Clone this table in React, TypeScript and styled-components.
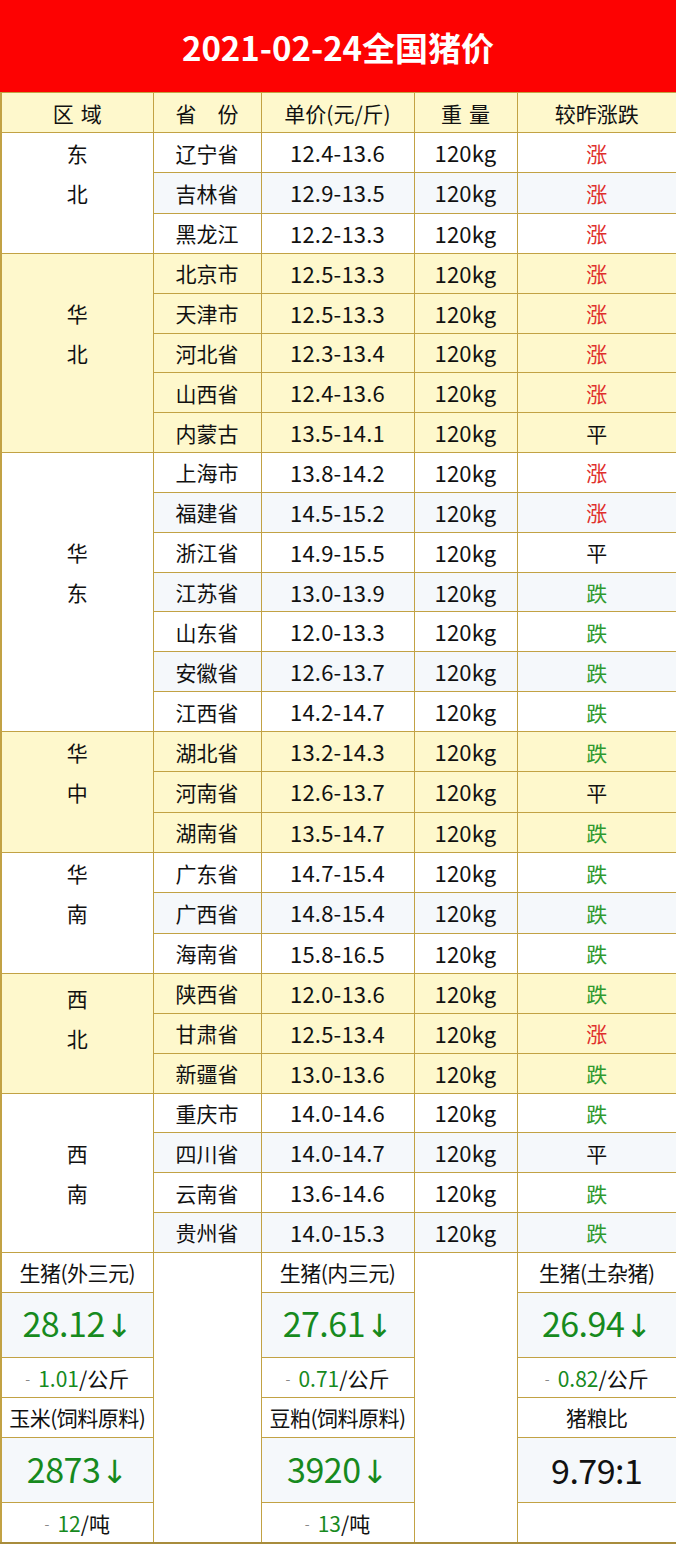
import React from "react";
import styled, { createGlobalStyle } from "styled-components";

const Global = createGlobalStyle`
  html, body { margin: 0; padding: 0; background: #fff; }
  body { font-family: "Noto Sans CJK SC", "Noto Sans", sans-serif; color: #111; }
`;

const YELLOW = "#fef8cc";
const TINT = "#f5f8fb";
const LINE = "#c2a244";

const Sheet = styled.div`
  width: 676px;
`;

const Title = styled.div`
  height: 92px;
  background: #fd0202;
  color: #fff;
  display: flex;
  align-items: center;
  justify-content: center;
  font-size: 33px;
  font-weight: 700;
  padding-top: 2px;
  box-sizing: border-box;
`;

const Table = styled.table`
  width: 676px;
  border-collapse: collapse;
  table-layout: fixed;
  border-left: 2px solid ${LINE};
  border-right: 2px solid ${LINE};
  border-bottom: 2px solid #a88c3c;
`;

const Row = styled.tr<{ $h?: number }>`
  height: ${(p) => p.$h ?? 39.85}px;
`;

const Cell = styled.td<{ $bg?: string }>`
  border: 1px solid ${LINE};
  background: ${(p) => p.$bg ?? "#fff"};
  text-align: center;
  vertical-align: middle;
  font-size: 21px;
  line-height: 24px;
  padding: 0;
  white-space: nowrap;
  overflow: hidden;
`;

const HeadCell = styled(Cell)<{ $gap?: number }>`
  background: ${YELLOW};
  padding-top: 2px;
  letter-spacing: ${(p) => p.$gap ?? 0}px;
  text-indent: ${(p) => p.$gap ?? 0}px;
`;

const RegionCell = styled(Cell)<{ $pad: number }>`
  padding-bottom: ${(p) => p.$pad}px;
  line-height: 40px;
`;

const Num = styled.span`
  font-size: 22px;
  letter-spacing: 0.2px;
`;

const Trend = styled.span<{ $c: string }>`
  color: ${(p) => p.$c};
`;

const Label = styled(Cell)`
  font-size: 21px;
  letter-spacing: -0.5px;
`;

const BigValue = styled(Cell)<{ $dark?: boolean }>`
  background: ${TINT};
  color: ${(p) => (p.$dark ? "#111" : "#178a1e")};
  font-size: 34px;
  line-height: 40px;
  letter-spacing: -0.5px;
`;

const Arrow = styled.span`
  font-family: "DejaVu Sans", sans-serif;
  font-size: 32px;
  margin-left: 1px;
`;

const Change = styled(Cell)`
  font-size: 21px;
`;

const Dash = styled.span`
  color: #888;
  font-size: 14px;
  margin-right: 8px;
  vertical-align: 3px;
`;

const Green = styled.span`
  color: #178a1e;
`;

type P = [string, string, "涨" | "平" | "跌"];

const groups: { name: string[]; yellow: boolean; pad: number; rows: P[] }[] = [
  {
    name: ["东", "北"], yellow: false, pad: 40,
    rows: [["辽宁省", "12.4-13.6", "涨"], ["吉林省", "12.9-13.5", "涨"], ["黑龙江", "12.2-13.3", "涨"]],
  },
  {
    name: ["华", "北"], yellow: true, pad: 40,
    rows: [
      ["北京市", "12.5-13.3", "涨"], ["天津市", "12.5-13.3", "涨"], ["河北省", "12.3-13.4", "涨"],
      ["山西省", "12.4-13.6", "涨"], ["内蒙古", "13.5-14.1", "平"],
    ],
  },
  {
    name: ["华", "东"], yellow: false, pad: 40,
    rows: [
      ["上海市", "13.8-14.2", "涨"], ["福建省", "14.5-15.2", "涨"], ["浙江省", "14.9-15.5", "平"],
      ["江苏省", "13.0-13.9", "跌"], ["山东省", "12.0-13.3", "跌"], ["安徽省", "12.6-13.7", "跌"],
      ["江西省", "14.2-14.7", "跌"],
    ],
  },
  {
    name: ["华", "中"], yellow: true, pad: 40,
    rows: [["湖北省", "13.2-14.3", "跌"], ["河南省", "12.6-13.7", "平"], ["湖南省", "13.5-14.7", "跌"]],
  },
  {
    name: ["华", "南"], yellow: false, pad: 40,
    rows: [["广东省", "14.7-15.4", "跌"], ["广西省", "14.8-15.4", "跌"], ["海南省", "15.8-16.5", "跌"]],
  },
  {
    name: ["西", "北"], yellow: true, pad: 30,
    rows: [["陕西省", "12.0-13.6", "跌"], ["甘肃省", "12.5-13.4", "涨"], ["新疆省", "13.0-13.6", "跌"]],
  },
  {
    name: ["西", "南"], yellow: false, pad: 0,
    rows: [
      ["重庆市", "14.0-14.6", "跌"], ["四川省", "14.0-14.7", "平"], ["云南省", "13.6-14.6", "跌"],
      ["贵州省", "14.0-15.3", "跌"],
    ],
  },
];

const trendColor = { 涨: "#e0302c", 平: "#111", 跌: "#2f9a2f" };

export default function App() {
  let idx = 0;
  return (
    <Sheet>
      <Global />
      <Title>2021-02-24全国猪价</Title>
      <Table>
        <colgroup>
          <col style={{ width: 152 }} />
          <col style={{ width: 108 }} />
          <col style={{ width: 153 }} />
          <col style={{ width: 103 }} />
          <col style={{ width: 160 }} />
        </colgroup>
        <tbody>
          <Row>
            <HeadCell $gap={7}>区域</HeadCell>
            <HeadCell>省　份</HeadCell>
            <HeadCell>单价(元/斤)</HeadCell>
            <HeadCell $gap={7}>重量</HeadCell>
            <HeadCell>较昨涨跌</HeadCell>
          </Row>
          {groups.map((g) =>
            g.rows.map((r, i) => {
              const n = idx++;
              const bg = g.yellow ? YELLOW : n % 2 === 1 ? TINT : "#fff";
              return (
                <Row key={r[0]}>
                  {i === 0 && (
                    <RegionCell rowSpan={g.rows.length} $pad={g.pad} $bg={g.yellow ? YELLOW : "#fff"}>
                      {g.name[0]}
                      <br />
                      {g.name[1]}
                    </RegionCell>
                  )}
                  <Cell $bg={bg}>{r[0]}</Cell>
                  <Cell $bg={bg}>
                    <Num>{r[1]}</Num>
                  </Cell>
                  <Cell $bg={bg}>
                    <Num>120kg</Num>
                  </Cell>
                  <Cell $bg={bg}>
                    <Trend $c={trendColor[r[2]]}>{r[2]}</Trend>
                  </Cell>
                </Row>
              );
            })
          )}

          <Row>
            <Label>生猪(外三元)</Label>
            <Cell rowSpan={6} />
            <Label>生猪(内三元)</Label>
            <Cell rowSpan={6} />
            <Label>生猪(土杂猪)</Label>
          </Row>
          <Row $h={65.5}>
            <BigValue>28.12<Arrow>↓</Arrow></BigValue>
            <BigValue>27.61<Arrow>↓</Arrow></BigValue>
            <BigValue>26.94<Arrow>↓</Arrow></BigValue>
          </Row>
          <Row>
            <Change>
              <Dash>-</Dash>
              <Green>1.01</Green>/公斤
            </Change>
            <Change>
              <Dash>-</Dash>
              <Green>0.71</Green>/公斤
            </Change>
            <Change>
              <Dash>-</Dash>
              <Green>0.82</Green>/公斤
            </Change>
          </Row>
          <Row>
            <Label>玉米(饲料原料)</Label>
            <Label>豆粕(饲料原料)</Label>
            <Label>猪粮比</Label>
          </Row>
          <Row $h={65.5}>
            <BigValue>2873<Arrow>↓</Arrow></BigValue>
            <BigValue>3920<Arrow>↓</Arrow></BigValue>
            <BigValue $dark>9.79:1</BigValue>
          </Row>
          <Row>
            <Change>
              <Dash>-</Dash>
              <Green>12</Green>/吨
            </Change>
            <Change>
              <Dash>-</Dash>
              <Green>13</Green>/吨
            </Change>
            <Change />
          </Row>
        </tbody>
      </Table>
    </Sheet>
  );
}
